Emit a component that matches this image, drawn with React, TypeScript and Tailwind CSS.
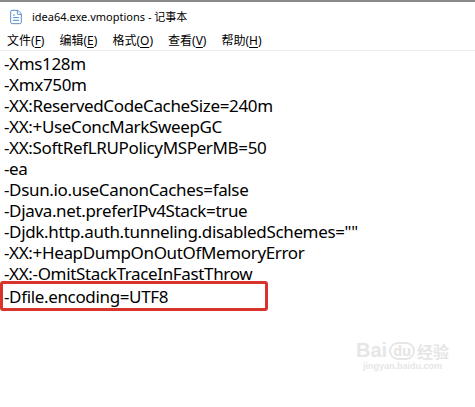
import { FileText } from 'lucide-react'

const lines = [
  '-Xms128m',
  '-Xmx750m',
  '-XX:ReservedCodeCacheSize=240m',
  '-XX:+UseConcMarkSweepGC',
  '-XX:SoftRefLRUPolicyMSPerMB=50',
  '-ea',
  '-Dsun.io.useCanonCaches=false',
  '-Djava.net.preferIPv4Stack=true',
  '-Djdk.http.auth.tunneling.disabledSchemes=""',
  '-XX:+HeapDumpOnOutOfMemoryError',
  '-XX:-OmitStackTraceInFastThrow',
]

const menus = [
  ['文件', 'F'],
  ['编辑', 'E'],
  ['格式', 'O'],
  ['查看', 'V'],
  ['帮助', 'H'],
]

export default function App() {
  return (
    <div className="w-[475px] h-[407px] bg-white overflow-hidden relative font-['Noto_Sans','Noto_Sans_CJK_SC',sans-serif] text-black">
      {/* Title bar */}
      <div className="h-[31px] border-t-2 border-[#8a8a8a] flex items-center pl-[8px] gap-[8px]">
        <FileText size={16} strokeWidth={1.5} className="text-[#5b8fc7]" />
        <span className="text-[11px] leading-none">idea64.exe.vmoptions - 记事本</span>
      </div>

      {/* Menu bar */}
      <div className="h-[20px] flex items-center pl-[7px] gap-[15px] text-[12px] leading-none border-b border-[#ececec]">
        {menus.map(([label, key]) => (
          <span key={key}>
            {label}(<span className="underline underline-offset-2">{key}</span>)
          </span>
        ))}
      </div>

      {/* Editor */}
      <div className="pt-[2px] text-[17px] leading-[21px] tracking-[-0.35px]">
        {lines.map((l) => (
          <div key={l} className="pl-[4px] h-[21px]">{l}</div>
        ))}
        <div className="-mt-[3px] w-[268px] h-[30px] border-[3px] border-[#d8342c] rounded-[3px] pl-[1px] flex items-center">
          -Dfile.encoding=UTF8
        </div>
      </div>

      {/* watermark */}
      <div className="absolute left-[356px] top-[340px] flex flex-col items-center text-[#e6e6e6]">
        <div className="flex items-end gap-[2px] font-bold">
          <span className="text-[20px] leading-none font-['Liberation_Sans',sans-serif]">Bai</span>
          <span className="text-[14px] leading-none rounded-full border-2 border-[#e6e6e6] px-[2px]">du</span>
          <span className="text-[16px] leading-none">经验</span>
        </div>
        <span className="text-[9px] font-['Liberation_Sans',sans-serif] font-bold">jingyan.baidu.com</span>
      </div>
    </div>
  )
}
